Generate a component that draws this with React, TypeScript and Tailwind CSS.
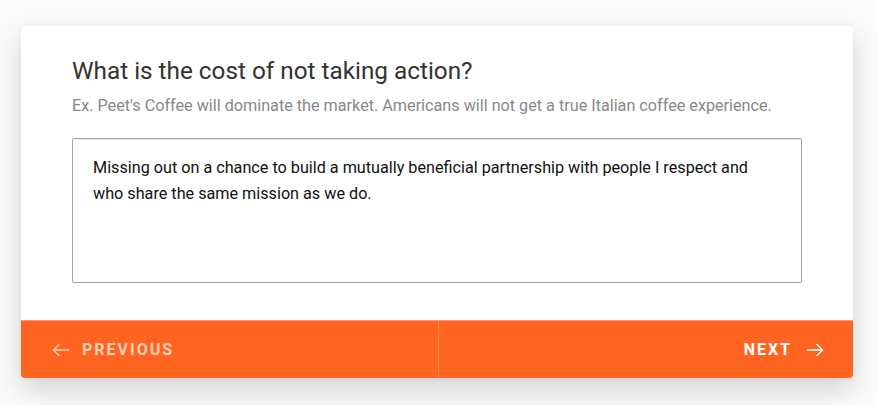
export default function App() {
  return (
    <div className="min-h-screen w-full bg-[#fbfbfb] pt-[26px] px-[21px] font-['Roboto','Liberation_Sans',sans-serif]">
      <div className="w-[832px] rounded-[4px] bg-white shadow-[0_12px_28px_rgba(0,0,0,0.16),0_0_6px_rgba(0,0,0,0.04)]">
        <div className="px-[51px] pt-[29px] pb-[37px]">
          <h2 className="text-[24.3px] leading-[32px] text-[#333]">What is the cost of not taking action?</h2>
          <p className="mt-[9px] text-[16.2px] leading-[20px] text-[#888]">
            Ex. Peet's Coffee will dominate the market. Americans will not get a true Italian coffee experience.
          </p>
          <div className="mt-[22px] h-[145px] w-[730px] rounded-[2px] border border-[#a3a3a3] pl-[20px] pr-[40px] pt-[16px] text-[16.2px] leading-[26px] text-[#111] shadow-[inset_0_1px_1px_rgba(0,0,0,0.08)]">
            Missing out on a chance to build a mutually beneficial partnership with people I respect and who share the same mission as we do.
          </div>
        </div>
        <div className="flex h-[58px] overflow-hidden rounded-b-[4px] border-t border-[#ff9566] bg-[#ff6520]">
          <button className="flex flex-1 items-center gap-[12px] border-r border-[#ff8a55] pl-[31px] text-[16px] font-bold tracking-[2px] text-[#ffd0b8]">
            <svg width="18" height="14" viewBox="0 0 18 14" fill="none" stroke="currentColor" strokeWidth="1.4">
              <path d="M17 7H1.5M7.5 1L1.5 7l6 6" />
            </svg>
            PREVIOUS
          </button>
          <button className="flex flex-1 items-center justify-end gap-[14px] pr-[29px] text-[16px] font-bold tracking-[2px] text-white">
            NEXT
            <svg width="18" height="14" viewBox="0 0 18 14" fill="none" stroke="currentColor" strokeWidth="1.4">
              <path d="M1 7h15.5M10.5 1l6 6-6 6" />
            </svg>
          </button>
        </div>
      </div>
    </div>
  );
}
